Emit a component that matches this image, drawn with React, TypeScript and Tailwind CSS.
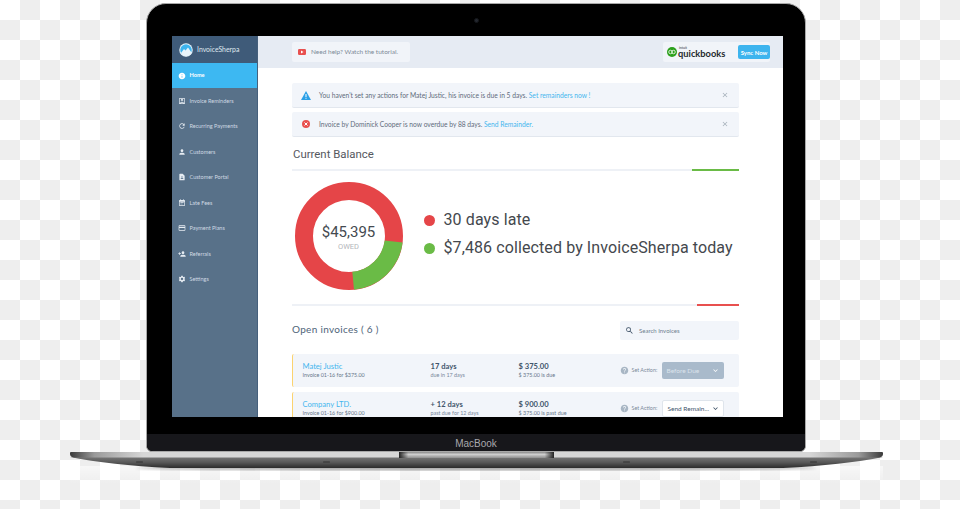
import { MdInfo, MdOutlineAccountBox, MdRefresh, MdPerson, MdContactPage, MdPayment, MdPersonAdd, MdSettings, MdEventNote, MdHelp, MdClose, MdSearch, MdKeyboardArrowDown } from "react-icons/md";
import type { ReactNode } from "react";

const nav: [string, ReactNode][] = [
  ["Invoice Reminders", <MdOutlineAccountBox />],
  ["Recurring Payments", <MdRefresh />],
  ["Customers", <MdPerson />],
  ["Customer Portal", <MdContactPage />],
  ["Late Fees", <MdEventNote />],
  ["Payment Plans", <MdPayment />],
  ["Referrals", <MdPersonAdd />],
  ["Settings", <MdSettings />],
];

function Logo() {
  return (
    <svg width="14" height="14" viewBox="0 0 28 28">
      <circle cx="14" cy="14" r="13.5" fill="#e8f4fb" />
      <circle cx="14" cy="14" r="11.5" fill="#3db4ee" />
      <path d="M4 20 L10 12 L13 15 L18 9 L25 19 A11.5 11.5 0 0 1 4 20Z" fill="#e8f4fb" />
    </svg>
  );
}

function Alert({ icon, text, link }: { icon: ReactNode; text: string; link: string }) {
  return (
    <div className="flex items-center h-[25px] bg-[#f2f5fa] border-b border-[#e2e7ee] rounded-[2px] pl-[9px] pr-[10px]">
      <span className="w-[10px] flex justify-center">{icon}</span>
      <span className="ml-[8px] text-[6.7px] text-[#5f6c7c]">{text} <span className="text-[#45b6ee]">{link}</span></span>
      <MdClose className="ml-auto text-[8px] text-[#a3adb8]" />
    </div>
  );
}

function Row({ name, sub, days, due, amount, owed, children }: { name: string; sub: string; days: string; due: string; amount: string; owed: string; children: ReactNode }) {
  return (
    <div className="flex items-center h-[33px] shrink-0 bg-[#f2f5fa] rounded-[2px] border-l-[1.5px] border-[#fbd36f] pl-[9.5px] pr-[15px]">
      <div className="w-[128px] pb-[2px]">
        <div className="text-[7.6px] leading-[10px] text-[#45b6ee]">{name}</div>
        <div className="text-[5.4px] leading-[8px] text-[#67768a]">{sub}</div>
      </div>
      <div className="w-[88px] pb-[2px]">
        <div className="text-[7.6px] leading-[10px] font-bold text-[#42566c]">{days}</div>
        <div className="text-[5.4px] leading-[8px] text-[#78879a]">{due}</div>
      </div>
      <div className="w-[101px] pb-[2px]">
        <div className="text-[7.6px] leading-[10px] font-bold text-[#42566c]">{amount}</div>
        <div className="text-[5.4px] leading-[8px] text-[#67768a]">{owed}</div>
      </div>
      <MdHelp className="text-[9px] text-[#a8b6c4]" />
      <span className="ml-[3px] text-[5.4px] text-[#7c8a9a] w-[30px]">Set Action:</span>
      {children}
    </div>
  );
}

export default function App() {
  return (
    <div className="w-[960px] h-[509px] overflow-hidden pt-[3px] pl-[70px] font-[family-name:Lato,sans-serif] bg-[image:repeating-conic-gradient(#eeeeee_0_25%,#ffffff_0_50%)] bg-[length:40px_40px]">
      <div className="ml-[76px] w-[660px] h-[449px] flex flex-col bg-black rounded-t-[20px] rounded-b-[6px] border border-[#a8a8a8]">
        <div className="h-[32px] flex justify-center items-center shrink-0">
          <div className="w-[5px] h-[5px] rounded-full bg-[#23272e] border border-[#15171b]" />
        </div>
        <div className="ml-[25px] w-[611px] h-[381px] shrink-0 flex overflow-hidden bg-white">
          <aside className="w-[86px] shrink-0 bg-[#587189] border-r border-[#46607c] flex flex-col">
            <div className="h-[27px] flex items-center pl-[7px] gap-[4px] bg-[#3f5b79]">
              <Logo />
              <span className="text-[6.9px] text-[#dfe7ef]">InvoiceSherpa</span>
            </div>
            <div className="h-[25px] flex items-center pl-[6px] bg-[#3db8f2] text-white">
              <MdInfo className="text-[8px]" />
              <span className="ml-[3.5px] text-[5.6px] font-bold">Home</span>
            </div>
            {nav.map(([label, icon]) => (
              <div key={label} className="h-[25.5px] shrink-0 flex items-center pl-[6px] text-[#cfd9e3]">
                <span className="text-[8px] text-[#e6ecf2]">{icon}</span>
                <span className="ml-[3.5px] text-[5.5px]">{label}</span>
              </div>
            ))}
          </aside>
          <main className="flex-1 flex flex-col min-w-0">
            <div className="h-[32px] shrink-0 flex items-center justify-between bg-[#e6ebf3] pl-[34px] pr-[13px]">
              <div className="flex items-center w-[118px] h-[20px] bg-[#f1f4f9] rounded-[2px] pl-[6px]">
                <svg width="8" height="6" viewBox="0 0 8 6"><rect width="8" height="6" rx="1.2" fill="#e8504f" /><path d="M3 1.5 L5.5 3 L3 4.5Z" fill="#fff" /></svg>
                <span className="ml-[5px] text-[6.5px] text-[#7d8a98]">Need help? Watch the tutorial.</span>
              </div>
              <div className="flex items-center w-[107px] h-[20px] bg-[#f1f4f9] rounded-[2px]">
                <svg className="ml-[4px] shrink-0" width="10" height="10" viewBox="0 0 20 20">
                  <circle cx="10" cy="10" r="10" fill="#2ca01c" />
                  <circle cx="7" cy="10" r="3.5" fill="none" stroke="#fff" strokeWidth="1.6" />
                  <circle cx="13" cy="10" r="3.5" fill="none" stroke="#fff" strokeWidth="1.6" />
                </svg>
                <div className="ml-[1px] w-[59px] flex flex-col">
                  <span className="block h-[3px] ml-[1px] text-[3.5px] leading-[3px] text-[#333]">intuit</span>
                  <span className="block h-[8px] text-[9.3px] leading-[8px] font-bold text-[#1f2a2e]">quickbooks</span>
                </div>
                <div className="ml-[3px] w-[33px] h-[14px] flex items-center justify-center rounded-[2px] bg-[#3db4ee] text-[6px] font-bold text-white whitespace-nowrap">Sync Now</div>
              </div>
            </div>
            <div className="pt-[15px] pl-[34px] pr-[44px] flex flex-col">
              <div className="flex flex-col gap-[4px]">
                <Alert
                  icon={<svg width="10" height="9" viewBox="0 0 20 18"><path d="M10 0 L20 18 H0Z" fill="#2b9fe6" /><rect x="9" y="6" width="2" height="6" fill="#fff" /><rect x="9" y="13.5" width="2" height="2" fill="#fff" /></svg>}
                  text="You haven't set any actions for Matej Justic, his invoice is due in 5 days."
                  link="Set remainders now !"
                />
                <Alert
                  icon={<svg width="8" height="8" viewBox="0 0 16 16"><circle cx="8" cy="8" r="8" fill="#e8504f" /><path d="M5 5 L11 11 M11 5 L5 11" stroke="#fff" strokeWidth="2" /></svg>}
                  text="Invoice by Dominick Cooper is now overdue by 88 days."
                  link="Send Remainder."
                />
              </div>
              <div className="h-[32px] pt-[4px] flex items-center pl-[1px] text-[11.4px] text-[#55585e] font-[family-name:Roboto,sans-serif]">Current Balance</div>
              <div className="h-[2px] flex justify-end bg-[#eef1f6]"><div className="w-[47px] h-[2px] bg-[#6abb46]" /></div>
              <div className="flex items-center pt-[11px] pb-[14px] pl-[2.5px] font-[family-name:Roboto,sans-serif]">
                <div className="relative w-[108px] h-[108px] shrink-0">
                  <svg width="108" height="108" viewBox="-54 -54 108 108">
                    <circle r="45" fill="none" stroke="#e54548" strokeWidth="18" />
                    <path d="M53.6 6.6 A54 54 0 0 1 5 53.8 L3.3 35.8 A36 36 0 0 0 35.7 4.4Z" fill="#6abb46" />
                  </svg>
                  <div className="absolute inset-0 pt-[3px] flex flex-col items-center justify-center">
                    <span className="text-[15px] leading-[17px] text-[#444a50]">$45,395</span>
                    <span className="text-[7.5px] leading-[9px] mt-[1px] text-[#b3b6ba]">OWED</span>
                  </div>
                </div>
                <div className="ml-[21px] mb-[4px] flex flex-col gap-[9px]">
                  <div className="flex items-center h-[19px]">
                    <span className="w-[11px] h-[11px] rounded-full bg-[#e54548]" />
                    <span className="ml-[9px] text-[16px] tracking-[0.1px] text-[#44484d]">30 days late</span>
                  </div>
                  <div className="flex items-center h-[19px]">
                    <span className="w-[11px] h-[11px] rounded-full bg-[#6abb46]" />
                    <span className="ml-[9px] text-[16px] tracking-[0.1px] text-[#44484d] whitespace-nowrap">$7,486 collected by InvoiceSherpa today</span>
                  </div>
                </div>
              </div>
              <div className="h-[2px] flex justify-end bg-[#eef1f6]"><div className="w-[42px] h-[2px] bg-[#e8504f]" /></div>
              <div className="mt-[15px] flex items-center justify-between h-[19px]">
                <span className="pb-[3px] text-[10px] tracking-[0.3px] text-[#4e6479]">Open invoices ( 6 )</span>
                <div className="w-[119px] h-[19px] flex items-center bg-[#f2f5fa] rounded-[2px] pl-[5px]">
                  <MdSearch className="text-[9px] text-[#34485e]" />
                  <span className="ml-[5px] text-[6px] text-[#6f7e8f]">Search Invoices</span>
                </div>
              </div>
              <div className="mt-[14px] flex flex-col gap-[5px]">
                <Row name="Matej Justic" sub="Invoice 01-16 for $375.00" days="17 days" due="due in 17 days" amount="$ 375.00" owed="$ 375.00 is due">
                  <div className="flex items-center justify-between w-[62px] h-[17px] rounded-[2px] bg-[#a9bacb] pl-[5px] pr-[4px] text-[6.5px] text-[#dbe3eb]">
                    <span>Before Due</span><MdKeyboardArrowDown className="text-[9px] text-white" />
                  </div>
                </Row>
                <Row name="Company LTD." sub="Invoice 01-16 for $900.00" days="+ 12 days" due="past due for 12 days" amount="$ 900.00" owed="$ 375.00 is past due">
                  <div className="flex items-center justify-between w-[62px] h-[17px] rounded-[2px] bg-white border border-[#dfe5ec] pl-[5px] pr-[3px] text-[6.5px] text-[#42566c]">
                    <span>Send Remain...</span><MdKeyboardArrowDown className="text-[9px] text-[#34485e]" />
                  </div>
                </Row>
              </div>
            </div>
          </main>
        </div>
        <div className="h-[17px] shrink-0" />
        <div className="flex-1 pt-[1px] flex items-center justify-center rounded-b-[6px] bg-[#17171b] text-[10px] text-[#a9a9ad] font-[family-name:'Liberation_Sans',sans-serif]">MacBook</div>
      </div>
      <svg width="813" height="40" viewBox="0 0 813 40" className="block">
        <defs>
          <linearGradient id="strip" x1="0" x2="1" y1="0" y2="0">
            <stop offset="0" stopColor="#3a3a3a" />
            <stop offset="0.03" stopColor="#9a9a9a" />
            <stop offset="0.09" stopColor="#d6d6d6" />
            <stop offset="0.91" stopColor="#d6d6d6" />
            <stop offset="0.97" stopColor="#9a9a9a" />
            <stop offset="1" stopColor="#3a3a3a" />
          </linearGradient>
          <linearGradient id="body" x1="0" x2="0" y1="0" y2="1">
            <stop offset="0" stopColor="#777" />
            <stop offset="0.5" stopColor="#575757" />
            <stop offset="1" stopColor="#2b2b2b" />
          </linearGradient>
          <linearGradient id="notch" x1="0" x2="0" y1="0" y2="1">
            <stop offset="0" stopColor="#888" />
            <stop offset="0.4" stopColor="#cfcfcf" />
            <stop offset="1" stopColor="#8e8e8e" />
          </linearGradient>
          <linearGradient id="ends" x1="0" x2="1" y1="0" y2="0">
            <stop offset="0" stopColor="#222" />
            <stop offset="0.06" stopColor="#222" stopOpacity="0" />
            <stop offset="0.94" stopColor="#222" stopOpacity="0" />
            <stop offset="1" stopColor="#222" />
          </linearGradient>
          <linearGradient id="fade" x1="0" x2="0" y1="0" y2="1">
            <stop offset="0" stopColor="#fff" stopOpacity="0.55" />
            <stop offset="1" stopColor="#fff" stopOpacity="0" />
          </linearGradient>
          <filter id="blur"><feGaussianBlur stdDeviation="1.5" /></filter>
        </defs>
        <rect x="0" y="14" width="813" height="18" fill="url(#fade)" />
        <ellipse cx="406" cy="16" rx="340" ry="2.5" fill="#555" opacity="0.5" filter="url(#blur)" />
        <path d="M0 5 Q40 13 100 16 H713 Q773 13 813 5Z" fill="url(#body)" />
        <path d="M1 0 H812 Q813 0 813 1 V2 Q813 5 809 5.5 H4 Q0 5 0 2 V1 Q0 0 1 0Z" fill="url(#strip)" />
        <rect x="329" y="0" width="155" height="6" fill="url(#notch)" />
        <rect x="329" y="0" width="155" height="6" fill="url(#ends)" />
        <rect x="66" y="9.5" width="7" height="1" rx="0.5" fill="#333" />
        <rect x="253" y="9.5" width="7" height="1" rx="0.5" fill="#333" />
        <rect x="553" y="9.5" width="7" height="1" rx="0.5" fill="#333" />
        <rect x="740" y="9.5" width="7" height="1" rx="0.5" fill="#333" />
      </svg>
    </div>
  );
}
